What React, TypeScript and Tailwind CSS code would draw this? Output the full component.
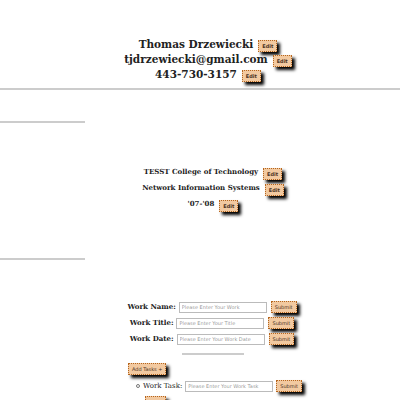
import React from 'react';

// small tan button with dotted border and heavy drop shadow
function TanButton({ label, className = 'ml-[4px]' }: { label: string; className?: string }) {
  return (
    <button
      className={`inline-block align-middle px-[3px] py-[2px] bg-[#f2c9a0] border border-dotted border-[#b5651d] text-[5px] leading-[6px] text-[#4a3020] shadow-[3px_3px_3px_#000] ${className}`}
      style={{ fontFamily: '"DejaVu Sans", sans-serif' }}
    >
      {label}
    </button>
  );
}

function Row({ text, h }: { text: string; h: string }) {
  return (
    <div className={`flex items-center justify-center ${h}`}>
      <span>{text}</span>
      <TanButton label="Edit" className="ml-[5px] mt-[3px]" />
    </div>
  );
}

function Field({ label, placeholder }: { label: string; placeholder: string }) {
  return (
    <div className="flex items-center justify-center h-[16px]">
      <span className="font-bold text-[7px] mr-[3px]">{label}</span>
      <input
        className="w-[88px] h-[11px] border border-[#bbb] px-[2px] text-[5px] bg-white"
        style={{ fontFamily: '"DejaVu Sans", sans-serif' }}
        placeholder={placeholder}
      />
      <TanButton label="Submit" />
    </div>
  );
}

export default function App() {
  return (
    <div className="w-[400px] h-[400px] overflow-hidden bg-white text-[#222]" style={{ fontFamily: '"DejaVu Serif", serif' }}>
      {/* contact header */}
      <div className="pt-[37px] pl-[16px] font-bold text-[10.5px] flex flex-col">
        <Row text="Thomas Drzewiecki" h="h-[15px]" />
        <Row text="tjdrzewiecki@gmail.com" h="h-[15px]" />
        <Row text="443-730-3157" h="h-[15px]" />
      </div>
      <div className="mt-[6px] h-[2px] bg-[#ccc]" />
      <div className="mt-[31px] w-[85px] h-[2px] bg-[#ccc]" />

      {/* education */}
      <div className="mt-[41px] pl-[26px] font-bold text-[7px] flex flex-col">
        <Row text="TESST College of Technology" h="h-[16px]" />
        <Row text="Network Information Systems" h="h-[16px]" />
        <Row text="'07-'08" h="h-[16px]" />
      </div>
      <div className="mt-[46px] w-[85px] h-[2px] bg-[#ccc]" />

      {/* work */}
      <div className="mt-[39px] pl-[24px] flex flex-col">
        <Field label="Work Name:" placeholder="Please Enter Your Work" />
        <Field label="Work Title:" placeholder="Please Enter Your Title" />
        <Field label="Work Date:" placeholder="Please Enter Your Work Date" />
      </div>
      <div className="mt-[6px] ml-[182px] w-[62px] h-[2px] bg-[#ccc]" />
      <div className="flex pl-[128px] mt-[8px] leading-none">
        <TanButton label="Add Tasks +" className="" />
      </div>
      <ul className="pl-[136px] mt-[4px] text-[7px] leading-none">
        <li className="flex items-center h-[14px]">
          <span className="w-[4px] h-[4px] rounded-full border border-[#777] mr-[3px]" />
          <span className="mr-[3px]">Work Task:</span>
          <input
            className="w-[88px] h-[11px] border border-[#bbb] px-[2px] text-[5px] bg-white"
            style={{ fontFamily: '"DejaVu Sans", sans-serif' }}
            placeholder="Please Enter Your Work Task"
          />
          <TanButton label="Submit" className="ml-[3px]" />
        </li>
      </ul>
      <div className="flex pl-[145px] mt-[3px] leading-none">
        <TanButton label="DG..." className="" />
      </div>
    </div>
  );
}
